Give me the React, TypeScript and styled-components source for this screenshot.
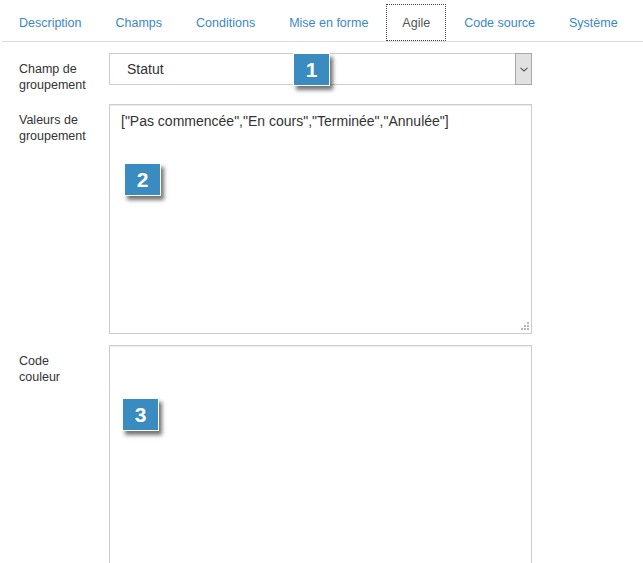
import React from "react";
import styled, { createGlobalStyle } from "styled-components";

const Global = createGlobalStyle`
  html, body { margin: 0; padding: 0; overflow: hidden; background: #fff; }
  body { font-family: "Liberation Sans", Arial, sans-serif; color: #333; }
  * { box-sizing: border-box; }
`;

const Page = styled.div`
  width: 643px;
  height: 563px;
  overflow: hidden;
`;

const TabBar = styled.nav`
  display: flex;
  margin-left: 2px;
  padding-top: 4px;
  border-bottom: 1px solid #dddddd;
`;

const Tab = styled.div<{ $active?: boolean }>`
  height: 37px;
  padding: 0 ${(p) => (p.$active ? 15 : 16)}px;
  margin: 0 ${(p) => (p.$active ? 1 : 0)}px;
  display: flex;
  align-items: center;
  font-size: 12.5px;
  white-space: nowrap;
  color: ${(p) => (p.$active ? "#555555" : "#3a87c8")};
  border: 1px ${(p) => (p.$active ? "dotted #444" : "solid transparent")};
`;

const Form = styled.div`
  display: flex;
  flex-direction: column;
  gap: 11px;
  padding: 11px 0 0 19px;
`;

const Row = styled.div`
  display: flex;
  align-items: flex-start;
`;

const Label = styled.label`
  width: 90px;
  flex: none;
  padding-top: 8px;
  font-size: 12.5px;
  line-height: 16px;
  color: #333;
`;

const Field = styled.div`
  position: relative;
  width: 423px;
  flex: none;
`;

const SelectBox = styled.div`
  display: flex;
  align-items: stretch;
  height: 32px;
  border: 1px solid #cccccc;
  background: #fff;
`;

const SelectValue = styled.div`
  flex: 1;
  display: flex;
  align-items: center;
  padding-left: 17px;
  font-size: 14px;
  color: #333;
`;

const ArrowButton = styled.div`
  width: 17px;
  margin: -1px -1px -1px 0;
  display: flex;
  align-items: center;
  justify-content: center;
  background: #e1e1e1;
  border: 1px solid #a8a8a8;
`;

const TextArea = styled.textarea<{ $h: number }>`
  display: block;
  width: 100%;
  height: ${(p) => p.$h}px;
  margin: 0;
  padding: 6px 11px;
  border: 1px solid #cccccc;
  box-shadow: inset 0 1px 1px rgba(0, 0, 0, 0.075);
  font-family: "Liberation Sans", Arial, sans-serif;
  font-size: 14px;
  line-height: 20px;
  color: #333;
  resize: none;
  outline: none;
  background: #fff;
`;

const Grip = styled.svg`
  position: absolute;
  right: 3px;
  bottom: 4px;
`;

const Badge = styled.div<{ $left: number; $top: number }>`
  position: absolute;
  left: ${(p) => p.$left}px;
  top: ${(p) => p.$top}px;
  width: 37px;
  height: 33px;
  display: flex;
  align-items: center;
  justify-content: center;
  background: #3a8bbf;
  border: 1px solid #ffffff;
  box-shadow: 3px 4px 4px rgba(0, 0, 0, 0.55);
  color: #fff;
  font-size: 21px;
  font-weight: bold;
  font-family: "Liberation Sans", Arial, sans-serif;
`;

const tabs = [
  "Description",
  "Champs",
  "Conditions",
  "Mise en forme",
  "Agile",
  "Code source",
  "Système",
];

const ResizeGrip = () => (
  <Grip width="8" height="8" viewBox="0 0 8 8">
    <rect x="6" y="0" width="2" height="2" fill="#b8b8b8" />
    <rect x="3" y="3" width="2" height="2" fill="#b8b8b8" />
    <rect x="6" y="3" width="2" height="2" fill="#b8b8b8" />
    <rect x="0" y="6" width="2" height="2" fill="#b8b8b8" />
    <rect x="3" y="6" width="2" height="2" fill="#b8b8b8" />
    <rect x="6" y="6" width="2" height="2" fill="#b8b8b8" />
  </Grip>
);

export default function App() {
  return (
    <Page>
      <Global />
      <TabBar>
        {tabs.map((t) => (
          <Tab key={t} $active={t === "Agile"}>
            {t}
          </Tab>
        ))}
      </TabBar>
      <Form>
        <Row>
          <Label>
            Champ de
            <br />
            groupement
          </Label>
          <Field>
            <SelectBox>
              <SelectValue>Statut</SelectValue>
              <ArrowButton>
                <svg width="8" height="5" viewBox="0 0 8 5">
                  <path d="M0.5 0.8 L4 4 L7.5 0.8" fill="none" stroke="#555" strokeWidth="1.1" />
                </svg>
              </ArrowButton>
            </SelectBox>
            <Badge $left={184} $top={0}>1</Badge>
          </Field>
        </Row>
        <Row>
          <Label>
            Valeurs de
            <br />
            groupement
          </Label>
          <Field>
            <TextArea
              $h={230}
              readOnly
              value={'["Pas commencée","En cours","Terminée","Annulée"]'}
            />
            <ResizeGrip />
            <Badge $left={15} $top={59}>2</Badge>
          </Field>
        </Row>
        <Row>
          <Label>
            Code
            <br />
            couleur
          </Label>
          <Field>
            <TextArea $h={230} readOnly value="" />
            <Badge $left={13} $top={53}>3</Badge>
          </Field>
        </Row>
      </Form>
    </Page>
  );
}
